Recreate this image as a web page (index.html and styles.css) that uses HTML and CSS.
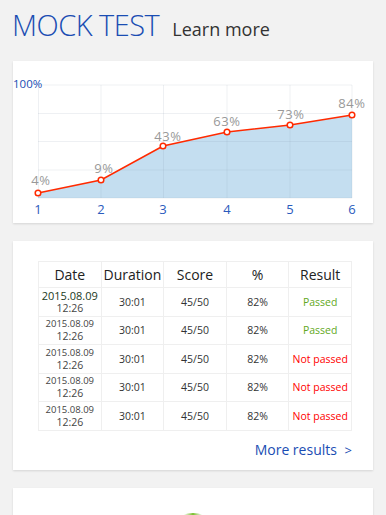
FILE: index.html
```html
<!DOCTYPE html>
<html>
<head>
<meta charset="utf-8">
<link rel="stylesheet" href="styles.css">
</head>
<body>
<div class="page">
  <header class="head">
    <h1 class="title">MOCK TEST</h1>
    <a class="learn">Learn more</a>
  </header>

  <section class="card chart-card">
    <svg class="chart" width="360" height="162" viewBox="0 0 360 162">
      <polygon class="area" points="25,132 88,119 150,85 214,71 277,64 339,54 339,137 25,137"/>
      <g class="grid">
        <line x1="25" y1="24" x2="339" y2="24"/>
        <line x1="25" y1="52.5" x2="339" y2="52.5"/>
        <line x1="25" y1="80.5" x2="339" y2="80.5"/>
        <line x1="25" y1="109" x2="339" y2="109"/>
        <line x1="25" y1="137" x2="339" y2="137"/>
        <line x1="25.5" y1="24" x2="25.5" y2="137"/>
        <line x1="88" y1="24" x2="88" y2="137"/>
        <line x1="150.5" y1="24" x2="150.5" y2="137"/>
        <line x1="214" y1="24" x2="214" y2="137"/>
        <line x1="277" y1="24" x2="277" y2="137"/>
        <line x1="339" y1="24" x2="339" y2="137"/>
      </g>
      <polyline class="line" points="25,132 88,119 150,85 214,71 277,64 339,54"/>
      <g class="dots">
        <circle cx="25" cy="132" r="2.8"/>
        <circle cx="88" cy="119" r="2.8"/>
        <circle cx="150" cy="85" r="2.8"/>
        <circle cx="214" cy="71" r="2.8"/>
        <circle cx="277" cy="64" r="2.8"/>
        <circle cx="339" cy="54" r="2.8"/>
      </g>
      <g class="vals">
        <text x="28" y="124">4%</text>
        <text x="91" y="112">9%</text>
        <text x="155" y="80">43%</text>
        <text x="214" y="65">63%</text>
        <text x="278" y="58">73%</text>
        <text x="339" y="47">84%</text>
      </g>
      <text class="max" x="0" y="27">100%</text>
      <g class="xl">
        <text x="25" y="153">1</text>
        <text x="88" y="153">2</text>
        <text x="150" y="153">3</text>
        <text x="214" y="153">4</text>
        <text x="277" y="153">5</text>
        <text x="339" y="153">6</text>
      </g>
    </svg>
  </section>

  <section class="card table-card">
    <table class="results">
      <thead>
        <tr><th>Date</th><th>Duration</th><th>Score</th><th>%</th><th>Result</th></tr>
      </thead>
      <tbody>
        <tr><td class="date first"><span class="d">2015.08.09</span><span class="t">12:26</span></td><td>30:01</td><td>45/50</td><td>82%</td><td class="ok">Passed</td></tr>
        <tr><td class="date"><span class="d">2015.08.09</span><span class="t">12:26</span></td><td>30:01</td><td>45/50</td><td>82%</td><td class="ok">Passed</td></tr>
        <tr><td class="date"><span class="d">2015.08.09</span><span class="t">12:26</span></td><td>30:01</td><td>45/50</td><td>82%</td><td class="bad">Not passed</td></tr>
        <tr><td class="date"><span class="d">2015.08.09</span><span class="t">12:26</span></td><td>30:01</td><td>45/50</td><td>82%</td><td class="bad">Not passed</td></tr>
        <tr><td class="date"><span class="d">2015.08.09</span><span class="t">12:26</span></td><td>30:01</td><td>45/50</td><td>82%</td><td class="bad">Not passed</td></tr>
      </tbody>
    </table>
    <div class="more-row"><a class="more">More results <span class="chev">&gt;</span></a></div>
  </section>

  <section class="card third-card">
    <svg class="donut" width="60" height="30" viewBox="0 0 60 30">
      <defs>
        <linearGradient id="g" x1="0" x2="1" y1="0" y2="0">
          <stop offset="0.3" stop-color="#ffffff"/>
          <stop offset="0.5" stop-color="#79bd2c"/>
          <stop offset="0.7" stop-color="#ffffff"/>
        </linearGradient>
      </defs>
      <circle cx="30" cy="32" r="24" fill="none" stroke="url(#g)" stroke-width="6"/>
    </svg>
  </section>
</div>
</body>
</html>
```
FILE: styles.css
```css
html, body {
  margin: 0;
  padding: 0;
  background: #f2f2f2;
  font-family: "Open Sans", "DejaVu Sans", sans-serif;
  overflow: hidden;
}
.page {
  display: flex;
  flex-direction: column;
  gap: 18px;
  padding: 0 13px;
}
.head {
  display: flex;
  align-items: baseline;
  gap: 13px;
  padding: 7px 0 0 0;
  margin-left: -1px;
  height: 36px;
}
.title {
  margin: 0;
  font-size: 29px;
  line-height: 36px;
  font-weight: 300;
  color: #1a4db3;
  letter-spacing: -0.5px;
}
.learn {
  font-size: 18px;
  color: #333;
}
.card {
  background: #fff;
  box-shadow: 0 1px 2px rgba(0,0,0,0.12);
}
.chart-card {
  height: 162px;
}
.chart {
  display: block;
  font-family: "Open Sans", "DejaVu Sans", sans-serif;
}
.area { fill: #c4def0; }
.grid line { stroke: rgba(120,140,160,0.13); stroke-width: 1; }
.line { fill: none; stroke: #ff2a00; stroke-width: 1.6; }
.dots circle { fill: #fff; stroke: #ff2a00; stroke-width: 1.5; }
.vals text { fill: #999; font-size: 13px; text-anchor: middle; letter-spacing: 0.6px; }
.max { fill: #1a4db3; font-size: 11.5px; }
.xl text { fill: #2b5bbd; font-size: 13px; text-anchor: middle; }

.table-card {
  padding: 20px 21px 0 25px;
  height: 209px;
}
.results {
  width: 314px;
  border-collapse: collapse;
  table-layout: fixed;
  color: #333;
}
.results th, .results td {
  border: 1px solid #efefef;
  text-align: center;
  padding: 0;
}
.results th {
  font-weight: 400;
  font-size: 14px;
  color: #222;
  height: 25px;
}
.results td {
  height: 27.5px;
  font-size: 10.5px;
  line-height: 12px;
}
.date .d, .date .t {
  display: block;
  line-height: 12px;
}
.date .d { font-size: 9.5px; color: #444; }
.date .t { font-size: 10.5px; color: #444; }
.date.first .d { font-size: 11px; color: #223a22; line-height: 13px; }
.ok { color: #62a81c; }
.bad { color: #ff0000; }
.more-row {
  display: flex;
  justify-content: flex-end;
  padding-top: 9px;
}
.more {
  font-size: 14px;
  color: #1a4db3;
}
.chev {
  margin-left: 4px;
  font-size: 13px;
}
.third-card {
  height: 80px;
  display: flex;
  justify-content: center;
  padding-top: 20px;
}
.donut { display: block; margin-left: 0; }
```
